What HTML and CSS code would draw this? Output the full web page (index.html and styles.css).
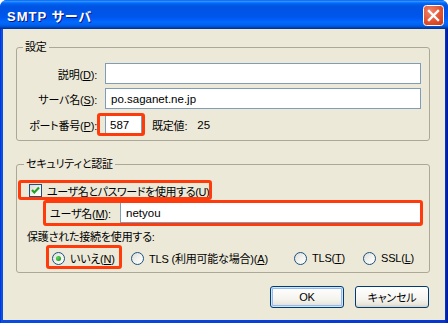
FILE: index.html
```html
<!DOCTYPE html>
<html lang="ja">
<head>
<meta charset="utf-8">
<title>SMTP サーバ</title>
<link rel="stylesheet" href="styles.css">
</head>
<body>
<div class="window">
  <div class="titlebar">
    <span class="title">SMTP サーバ</span>
    <span class="close">
      <svg width="21" height="21" viewBox="0 0 21 21">
        <defs>
          <radialGradient id="cg" cx="0.35" cy="0.3" r="0.9">
            <stop offset="0" stop-color="#F0846A"/>
            <stop offset="0.6" stop-color="#E0502E"/>
            <stop offset="1" stop-color="#C23A1C"/>
          </radialGradient>
        </defs>
        <rect x="0.5" y="0.5" width="20" height="20" rx="3" fill="url(#cg)" stroke="#fff"/>
        <path d="M6 6 L15 15 M15 6 L6 15" stroke="#fff" stroke-width="2.4" stroke-linecap="square"/>
      </svg>
    </span>
  </div>
  <div class="client">
    <fieldset class="group g1">
      <legend>設定</legend>
      <div class="row">
        <span class="lbl">説明(<u>D</u>):</span>
        <div class="input wide"></div>
      </div>
      <div class="row r2">
        <span class="lbl">サーバ名(<u>S</u>):</span>
        <div class="input wide">po.saganet.ne.jp</div>
      </div>
      <div class="row r3">
        <span class="lbl">ポート番号(<u>P</u>):</span>
        <div class="input port">587</div>
        <span class="deflbl">既定値:</span>
        <span class="defval">25</span>
        <span class="mark mark-port"></span>
      </div>
    </fieldset>

    <fieldset class="group g2">
      <legend>セキュリティと認証</legend>
      <div class="chkrow">
        <span class="checkbox">
          <svg width="11" height="11" viewBox="0 0 11 11"><path d="M2 5 L4.3 7.4 L9 2.6" fill="none" stroke="#21A121" stroke-width="2.2"/></svg>
        </span>
        <span class="chktext">ユーザ名とパスワードを使用する(<u>U</u>)</span>
        <span class="mark mark-chk"></span>
      </div>
      <div class="userrow">
        <span class="ulbl">ユーザ名(<u>M</u>):</span>
        <div class="input user">netyou</div>
        <span class="mark mark-user"></span>
      </div>
      <div class="seclbl">保護された接続を使用する:</div>
      <div class="radiorow">
        <span class="opt o1"><span class="radio on"></span><span>いいえ(<u>N</u>)</span></span>
        <span class="opt o2"><span class="radio"></span><span>TLS (利用可能な場合)(<u>A</u>)</span></span>
        <span class="opt o3"><span class="radio"></span><span>TLS(<u>T</u>)</span></span>
        <span class="opt o4"><span class="radio"></span><span>SSL(<u>L</u>)</span></span>
        <span class="mark mark-radio"></span>
      </div>
    </fieldset>

    <div class="buttons">
      <button class="btn default">OK</button>
      <button class="btn">キャンセル</button>
    </div>
  </div>
</div>
</body>
</html>
```

FILE: styles.css
```css
html, body {
  margin: 0;
  padding: 0;
  background: #ffffff;
}
body {
  width: 448px;
  height: 323px;
  overflow: hidden;
  font-family: "Liberation Sans", "Noto Sans CJK JP", sans-serif;
  font-size: 11px;
  letter-spacing: -0.2px;
  font-feature-settings: "palt";
  color: #000;
}
u { text-decoration: underline; text-underline-offset: 1px; }

.window {
  width: 448px;
  height: 323px;
  display: flex;
  flex-direction: column;
  border-radius: 7px 7px 0 0;
  overflow: hidden;
  background: linear-gradient(to right, #0019CF 0, #0A52E8 1px, #0A4CE0 3px, #0842D8 50%, #0636D0 445px, #001EA0 447px);
}

.titlebar {
  height: 29px;
  flex: none;
  display: flex;
  align-items: center;
  justify-content: space-between;
  padding: 0 4px 0 7px;
  background: linear-gradient(to bottom, #0058EE 0%, #3593FF 4%, #288EFF 6%, #127DFF 8%, #036FFC 10%, #0262EE 14%, #0057E5 20%, #0054E3 24%, #0055EB 56%, #005BF5 66%, #026AFE 76%, #0062EF 86%, #0052D6 92%, #0040AB 96%, #003092 100%);
}
.title {
  color: #fff;
  font-weight: bold;
  font-size: 13px;
  letter-spacing: 1px;
  text-shadow: 1px 1px 0 #0A1883;
  margin-top: 1px;
}
.close {
  width: 21px;
  height: 21px;
  margin-top: 2px;
  display: block;
}
.close svg { display: block; }

.client {
  flex: 1;
  margin: 0 3px 3px 3px;
  background: #ECE9D8;
  padding: 11px 15px 0 13px;
  display: flex;
  flex-direction: column;
}

.group {
  margin: 0;
  border: 1px solid #ABA897;
  border-radius: 3px;
  min-width: 0;
  position: relative;
}
.group legend {
  padding: 0 2px;
  line-height: 14px;
  height: 14px;
}
.g1 {
  padding: 9px 8px 5px 0;
}
.g1 legend { margin-left: 6px; }
.g2 {
  margin-top: 16px;
  padding: 11px 8px 7px 0;
}
.g2 legend { margin-left: 7px; }

.row {
  display: flex;
  align-items: center;
  height: 21px;
  position: relative;
}
.r2 { margin-top: 4px; }
.r3 { margin-top: 5px; }
.lbl {
  width: 80px;
  flex: none;
  text-align: right;
  margin-right: 8px;
  white-space: nowrap;
}

.input {
  height: 21px;
  box-sizing: border-box;
  border: 1px solid #7F9DB9;
  background: #fff;
  display: flex;
  align-items: center;
  padding-left: 5px;
  font-size: 11.5px;
  letter-spacing: 0;
  white-space: nowrap;
}
.wide { flex: 1; }
.port {
  width: 37px;
  flex: none;
  padding-left: 4px;
}
.deflbl { margin-left: 10px; }
.defval { margin-left: 10px; font-size: 11.5px; letter-spacing: 0; }

.mark {
  position: absolute;
  border: 3px solid #FF3B0B;
  border-radius: 3px;
  box-sizing: border-box;
  pointer-events: none;
}
.mark-port { left: 80px; top: -1px; width: 48px; height: 23px; }

.chkrow {
  position: relative;
  height: 17px;
  display: flex;
  align-items: center;
  padding-left: 12px;
}
.checkbox {
  width: 13px;
  height: 13px;
  box-sizing: border-box;
  border: 1px solid #1C5180;
  background: linear-gradient(135deg, #DCDCD7 0%, #F4F4F0 60%, #FFFFFF 100%);
  display: flex;
  align-items: center;
  justify-content: center;
  flex: none;
}
.checkbox svg { display: block; }
.chktext { margin-left: 5px; white-space: nowrap; letter-spacing: -0.4px; }
.mark-chk { left: 1px; top: -2px; width: 194px; height: 20px; }

.userrow {
  position: relative;
  margin-top: 3px;
  height: 21px;
  display: flex;
  align-items: center;
  padding-left: 33px;
}
.ulbl { width: 70px; flex: none; white-space: nowrap; }
.user { width: 301px; flex: none; padding-left: 5px; }
.mark-user { left: 26px; top: -2px; width: 380px; height: 26px; }

.seclbl {
  margin-top: 7px;
  height: 14px;
  line-height: 14px;
  padding-left: 10px;
  white-space: nowrap;
}

.radiorow {
  position: relative;
  margin-top: 7px;
  height: 14px;
  display: flex;
  align-items: center;
  padding-left: 35px;
}
.opt {
  display: flex;
  align-items: center;
  flex: none;
  white-space: nowrap;
  gap: 5px;
}
.o1 { width: 79px; }
.o2 { width: 163px; }
.o3 { width: 69px; }
.radio {
  width: 13px;
  height: 13px;
  box-sizing: border-box;
  border-radius: 50%;
  border: 1px solid #1C5180;
  background: linear-gradient(135deg, #DCDCD7 0%, #F4F4F0 55%, #FFFFFF 100%);
  flex: none;
  display: flex;
  align-items: center;
  justify-content: center;
}
.radio.on::after {
  content: "";
  width: 5px;
  height: 5px;
  border-radius: 50%;
  background: radial-gradient(circle at 35% 35%, #5BD85B 0%, #21A121 70%, #1A8A1A 100%);
}
.mark-radio { left: 29px; top: -6px; width: 76px; height: 24px; }

.buttons {
  margin-top: 13px;
  display: flex;
  justify-content: flex-end;
  gap: 11px;
  padding-right: 1px;
}
.btn {
  width: 74px;
  height: 22px;
  margin: 0;
  padding: 0;
  border: 1px solid #003C74;
  border-radius: 3px;
  background: linear-gradient(to bottom, #FFFFFF 0%, #F5F4EF 60%, #EAE7DD 85%, #D6D0C5 100%);
  font-family: "Liberation Sans", "Noto Sans CJK JP", sans-serif;
  font-size: 11px;
  letter-spacing: -0.2px;
  font-feature-settings: "palt";
  color: #000;
}
.btn.default {
  box-shadow: inset 0 0 0 1px #CEE7FF, inset 0 0 0 2px #98B8EA;
}
```
